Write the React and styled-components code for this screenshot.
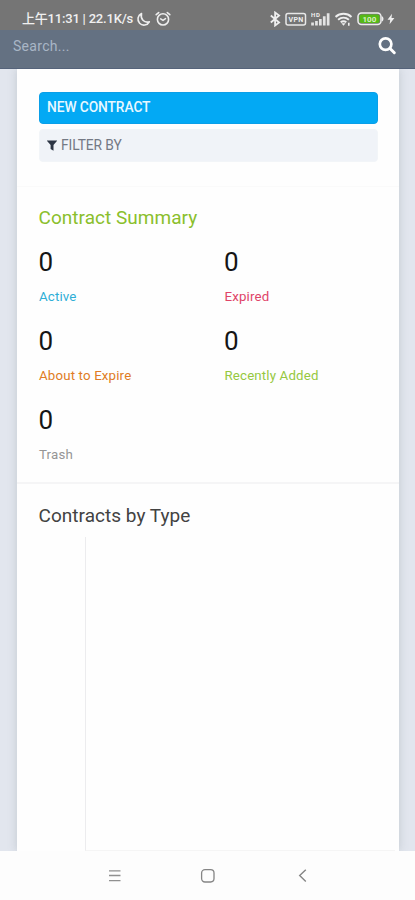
import React from "react";
import styled, { createGlobalStyle } from "styled-components";

const GlobalStyle = createGlobalStyle`
  * { box-sizing: border-box; }
  body { margin: 0; background: #fdfdfd; font-family: Roboto, "Noto Sans CJK SC", sans-serif; }
`;

const Screen = styled.div`
  width: 415px;
  height: 900px;
  display: flex;
  flex-direction: column;
  overflow: hidden;
  background: #fdfdfd;
`;

const StatusBar = styled.header`
  height: 30px;
  flex: none;
  display: flex;
  align-items: center;
  padding: 8px 20px 0 22px;
  background: #757575;
  color: #f0f0f0;
`;

const Clock = styled.span`
  width: 114px;
  font-size: 13px;
  line-height: 20px;
  font-weight: 500;
  letter-spacing: -0.2px;
  white-space: nowrap;
`;

const StatusIcons = styled.div`
  display: flex;
  align-items: center;
  gap: ${(p) => p.$gap}px;
  margin-left: ${(p) => (p.$end ? "auto" : "0")};
`;

const SearchBar = styled.div`
  height: 39px;
  flex: none;
  display: flex;
  justify-content: space-between;
  padding: 6px 18px 0 13px;
  background: #647182;
  border-bottom: 1px solid #55637a;
`;

const Placeholder = styled.span`
  color: #a9b6c6;
  font-size: 14px;
  line-height: 20px;
  letter-spacing: 0.3px;
`;

const Page = styled.main`
  height: 782px;
  flex: none;
  padding: 0 16px 0 17px;
  overflow: hidden;
  background: #e2e6ee;
`;

const Panel = styled.div`
  height: 100%;
  display: flex;
  flex-direction: column;
  background: #fefefe;
  box-shadow: 0 0 9px rgba(110, 125, 130, 0.28);
`;

const Actions = styled.section`
  height: 118px;
  flex: none;
  display: flex;
  flex-direction: column;
  gap: 5px;
  padding: 23px 21px 0 22px;
  border-bottom: 1px solid #fafafa;
`;

const Button = styled.button`
  height: ${(p) => (p.$primary ? 32 : 33)}px;
  display: flex;
  align-items: center;
  gap: 4px;
  padding: ${(p) => (p.$primary ? "0 7px 2px" : "0 7px 1px")};
  border: 1px solid ${(p) => (p.$primary ? "#0a9fe8" : "#f2f5f8")};
  border-radius: 4px;
  background: ${(p) => (p.$primary ? "#03a9f4" : "#f0f3f8")};
  color: ${(p) => (p.$primary ? "#e9f8ff" : "#747984")};
  font-family: inherit;
  font-size: ${(p) => (p.$primary ? 13.8 : 13.8)}px;
  font-weight: ${(p) => (p.$primary ? 500 : 400)};
  letter-spacing: -0.1px;
`;

const Summary = styled.section`
  height: 297px;
  flex: none;
  padding: 19px 22px 0;
  border-bottom: 2px solid #f5f5f6;
`;

const Heading = styled.h2`
  margin: 0 0 0 -0.5px;
  font-size: 19px;
  line-height: 24px;
  font-weight: 400;
  letter-spacing: 0.03px;
  color: ${(p) => p.$color};
`;

const StatGrid = styled.div`
  display: grid;
  grid-template-columns: 185.5px 1fr;
  grid-auto-rows: 79px;
  padding-top: 16px;
`;

const Stat = styled.div`
  display: flex;
  flex-direction: column;
  gap: 11px;
`;

const Count = styled.span`
  margin-left: -0.5px;
  font-size: 26px;
  line-height: 32px;
  color: #151515;
`;

const Label = styled.span`
  font-size: 13.3px;
  line-height: 16px;
  letter-spacing: 0.15px;
  color: ${(p) => p.$color};
`;

const TypeSection = styled.section`
  flex: 1;
  display: flex;
  flex-direction: column;
  padding: 20px 22px 0;
`;

const ChartArea = styled.div`
  flex: 1;
  margin: 9px -18px 0 46px;
  border-left: 1px solid #ececee;
  border-bottom: 1px solid #f5f5f5;
`;

const NavBar = styled.nav`
  flex: 1;
  display: grid;
  grid-template-columns: repeat(3, 18px);
  align-items: center;
  gap: 75px;
  padding-left: 106px;
`;

const stats = [
  ["Active", "#2eaed6"],
  ["Expired", "#e04468"],
  ["About to Expire", "#e07c24"],
  ["Recently Added", "#96c83f"],
  ["Trash", "#959595"],
];

const Moon = () => (
  <svg width="15" height="15" viewBox="0 0 15 15" fill="none" stroke="#eee" strokeWidth="1.6" strokeLinejoin="round">
    <path d="M5.5 1.6a6 6 0 1 0 7.8 8.2C8.1 11.2 4.2 7 5.5 1.6Z" />
  </svg>
);

const Alarm = () => (
  <svg width="16" height="16" viewBox="0 0 16 16" fill="none" stroke="#eee" strokeWidth="1.6" strokeLinecap="round">
    <circle cx="8" cy="8.4" r="5.6" />
    <path d="M1.2 3.7 3.7 1.6M14.8 3.7 12.3 1.6M5.7 7.9 8 9.4l2.5-1.8" />
  </svg>
);

const Bluetooth = () => (
  <svg width="12" height="16" viewBox="0 0 12 16" fill="none" stroke="#eee" strokeWidth="1.8">
    <path d="m.8 4.5 8.3 7-4 3V1.5l4 3-8.3 7" />
  </svg>
);

const VpnText = styled.text`
  font: 700 7px Roboto, sans-serif;
  fill: #eee;
`;

const Vpn = () => (
  <svg width="22" height="15" viewBox="0 0 22 15">
    <rect x="1" y="1.5" width="19.5" height="11.5" rx="2" fill="none" stroke="#e8e8e8" strokeWidth="1.5" />
    <VpnText x="3.6" y="9.8" textLength="14.5">VPN</VpnText>
  </svg>
);

const NetText = styled.text`
  font: 700 6px Roboto, sans-serif;
  fill: #eee;
`;

const Signal = () => (
  <svg width="21" height="15" viewBox="0 0 21 15" fill="#e4e4e4">
    <NetText x="0" y="5" textLength="9">HD</NetText>
    <path d="M.2 10.5h2.7v3H.2zM4.1 9h2.7v4.5H4.1zM8 7h2.7v6.5H8zM11.9 4.2h2.7v9.3h-2.7zM15.8 1.2h2.7v12.3h-2.7z" />
  </svg>
);

const Wifi = () => (
  <svg width="18" height="15" viewBox="0 0 18 15" fill="none" stroke="#eee" strokeWidth="2">
    <path d="M.5 4.9c4.6-4.1 11.4-4.1 16 0M3.1 7.7c3.2-2.7 7.6-2.7 10.8 0M5.7 10.3c1.7-1.3 3.9-1.3 5.6 0" />
    <path d="m6.4 11.2 2.1 2.6 2.1-2.6Z" fill="#eee" stroke="none" />
    <path d="M13.8 10.8v3" strokeWidth="1.6" />
  </svg>
);

const BatteryText = styled.text`
  font: 700 8px Roboto, sans-serif;
  fill: #d9efc4;
`;

const Battery = () => (
  <svg width="27" height="14" viewBox="0 0 27 14">
    <rect x="1" y="1" width="23" height="11.4" rx="3.5" fill="#757575" stroke="#eee" strokeWidth="1.5" />
    <rect x="2.5" y="2.5" width="20" height="8.4" rx="2" fill="#55b916" />
    <path d="M24.8 4.3c2.2.4 2.2 4.8 0 5.2Z" fill="#eee" />
    <BatteryText x="5.4" y="9.6" textLength="14">100</BatteryText>
  </svg>
);

const Bolt = () => (
  <svg width="8" height="12" viewBox="0 0 8 12" fill="#eee">
    <path d="M5 .8.5 6.7h2.7L2.6 11.3 7.4 5H4.5Z" />
  </svg>
);

const SearchIcon = () => (
  <svg width="20" height="20" viewBox="0 0 20 20" fill="none" stroke="#fff" strokeWidth="2.7" strokeLinecap="round">
    <circle cx="8.6" cy="8.1" r="5.8" />
    <path d="m13 12.5 4.3 4.2" strokeWidth="3" />
  </svg>
);

const Funnel = () => (
  <svg width="10" height="11" viewBox="0 0 10 11" fill="#2c3544">
    <path d="M.3.5h9.4c.3 0 .4.4.2.6L6.5 5v5.7L3.6 8.9V5L.1 1.1C-.1.9 0 .5.3.5Z" />
  </svg>
);

const MenuIcon = () => (
  <svg width="18" height="16" viewBox="0 0 18 16" stroke="#909090" strokeWidth="1.3">
    <path d="M3 2.8h11.5M3 7.5h11.5M3 12.6h11.5" />
  </svg>
);

const HomeIcon = () => (
  <svg width="18" height="18" viewBox="0 0 18 18" fill="none" stroke="#858585" strokeWidth="1.3">
    <rect x="2.6" y="2.6" width="12.4" height="12.4" rx="3.4" />
  </svg>
);

const BackIcon = () => (
  <svg width="18" height="16" viewBox="0 0 18 16" fill="none" stroke="#858585" strokeWidth="1.4">
    <path d="M13.8 1.7 7.7 7.5l6.1 6" />
  </svg>
);

export default function App() {
  return (
    <Screen>
      <GlobalStyle />
      <StatusBar>
        <Clock>上午11:31 | 22.1K/s</Clock>
        <StatusIcons $gap={4}>
          <Moon />
          <Alarm />
        </StatusIcons>
        <StatusIcons $gap={3.4} $end>
          <Bluetooth />
          <Vpn />
          <Signal />
          <Wifi />
          <Battery />
          <Bolt />
        </StatusIcons>
      </StatusBar>
      <SearchBar>
        <Placeholder>Search...</Placeholder>
        <SearchIcon />
      </SearchBar>
      <Page>
        <Panel>
          <Actions>
            <Button $primary>NEW CONTRACT</Button>
            <Button>
              <Funnel />
              FILTER BY
            </Button>
          </Actions>
          <Summary>
            <Heading $color="#8abf2c">Contract Summary</Heading>
            <StatGrid>
              {stats.map(([name, color]) => (
                <Stat key={name}>
                  <Count>0</Count>
                  <Label $color={color}>{name}</Label>
                </Stat>
              ))}
            </StatGrid>
          </Summary>
          <TypeSection>
            <Heading $color="#424242">Contracts by Type</Heading>
            <ChartArea />
          </TypeSection>
        </Panel>
      </Page>
      <NavBar>
        <MenuIcon />
        <HomeIcon />
        <BackIcon />
      </NavBar>
    </Screen>
  );
}
